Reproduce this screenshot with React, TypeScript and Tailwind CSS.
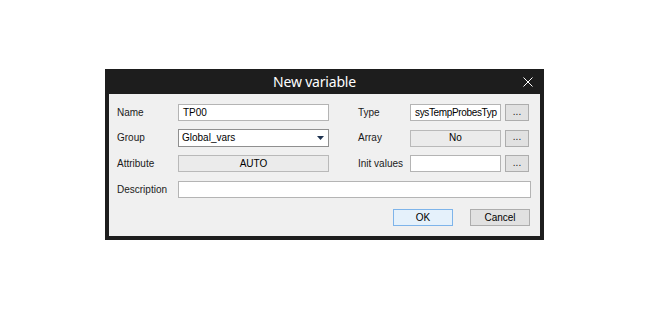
import React from "react";

const font = { fontFamily: '"Liberation Sans", Arial, sans-serif' };

function Label({ children, w }: { children: React.ReactNode; w: string }) {
  return <div className={`${w} shrink-0 text-[10px] text-[#1a1a1a] leading-none`}>{children}</div>;
}

function Dots() {
  return (
    <div className="ml-[4px] w-[24px] h-full shrink-0 bg-[#e1e1e1] border border-[#adadad] flex items-center justify-center text-[10px] text-[#222] leading-none pb-[2px]">
      ...
    </div>
  );
}

export default function App() {
  return (
    <div className="w-[650px] h-[325px] bg-white pt-[69px] pl-[105px]" style={font}>
      <div className="w-[439px] bg-[#1d1d1d] flex flex-col">
        <div className="relative h-[25px] flex items-center justify-center pr-[20px]">
          <span
            className="text-[14px] text-white leading-none"
            style={{ fontFamily: '"Noto Sans", "Open Sans", sans-serif', letterSpacing: "-0.2px" }}
          >
            New variable
          </span>
          <svg className="absolute right-[11px] top-[8px]" width="10" height="10" viewBox="0 0 10 10">
            <path d="M0.5 0.5 L9.5 9.5 M9.5 0.5 L0.5 9.5" stroke="#ffffff" strokeWidth="1" />
          </svg>
        </div>
        <div className="mx-[4px] mb-[4px] h-[142px] bg-[#f0f0f0] flex flex-col pl-[8px]">
          {/* Row 1 */}
          <div className="mt-[10px] h-[17px] flex items-center">
            <Label w="w-[61px]">Name</Label>
            <div className="w-[151px] h-full bg-white border border-[#b4b4b4] flex items-center pl-[4px] text-[10px] text-black leading-none">
              TP00
            </div>
            <div className="ml-[29px]" />
            <Label w="w-[52px]">Type</Label>
            <div className="w-[91px] h-full bg-white border border-[#b4b4b4] flex items-center pl-[4px] text-[10px] text-black leading-none whitespace-nowrap tracking-[-0.35px]">
              sysTempProbesTyp
            </div>
            <Dots />
          </div>
          {/* Row 2 */}
          <div className="mt-[8px] h-[18px] flex items-center">
            <Label w="w-[61px]">Group</Label>
            <div className="w-[151px] h-full bg-white border border-[#8f8f8f] flex items-center pl-[3px] pr-[4px] text-[10px] text-black leading-none justify-between">
              <span>Global_vars</span>
              <svg width="7" height="4" viewBox="0 0 7 4">
                <path d="M0 0 H7 L3.5 4 Z" fill="#1e3350" />
              </svg>
            </div>
            <div className="ml-[29px]" />
            <Label w="w-[52px]">Array</Label>
            <div className="w-[91px] h-[17px] bg-[#ebebeb] border border-[#b9b9b9] flex items-center justify-center text-[10px] text-black leading-none">
              No
            </div>
            <div className="h-[17px] flex">
              <Dots />
            </div>
          </div>
          {/* Row 3 */}
          <div className="mt-[8px] h-[17px] flex items-center">
            <Label w="w-[61px]">Attribute</Label>
            <div className="w-[151px] h-full bg-[#ebebeb] border border-[#b9b9b9] flex items-center justify-center text-[10px] text-black leading-none">
              AUTO
            </div>
            <div className="ml-[29px]" />
            <Label w="w-[52px]">Init values</Label>
            <div className="w-[91px] h-full bg-white border border-[#b4b4b4]" />
            <Dots />
          </div>
          {/* Row 4 */}
          <div className="mt-[9px] h-[17px] flex items-center">
            <Label w="w-[61px]">Description</Label>
            <div className="w-[353px] h-full bg-white border border-[#b4b4b4]" />
          </div>
          {/* Buttons */}
          <div className="mt-[11px] h-[17px] flex justify-end pr-[10px] gap-[17px]">
            <div className="w-[60px] h-full bg-[#e5f1fb] border border-[#7eb4ea] flex items-center justify-center text-[10px] text-black leading-none">
              OK
            </div>
            <div className="w-[60px] h-full bg-[#e1e1e1] border border-[#adadad] flex items-center justify-center text-[10px] text-black leading-none">
              Cancel
            </div>
          </div>
        </div>
      </div>
    </div>
  );
}
